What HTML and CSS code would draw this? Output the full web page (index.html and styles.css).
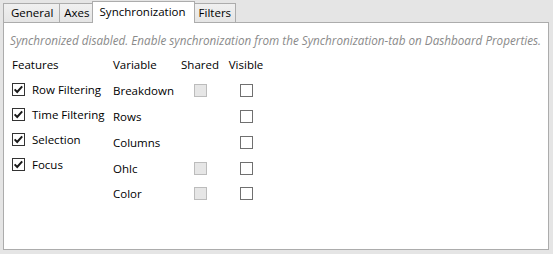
FILE: index.html
```html
<!DOCTYPE html>
<html lang="en">
<head>
    <meta charset="UTF-8">
    <title>Synchronization</title>
    <link rel="stylesheet" href="styles.css">
</head>
<body>
    <div class="window">
        <div class="tabs">
            <div class="tab">General</div>
            <div class="tab">Axes</div>
            <div class="tab active">Synchronization</div>
            <div class="tab">Filters</div>
        </div>

        <div class="panel">
            <p class="info">Synchronized disabled. Enable synchronization from the Synchronization-tab on Dashboard Properties.</p>

            <div class="content">
                <div class="features">
                    <div class="head">Features</div>
                    <label class="feature"><span class="check on"><svg viewBox="0 0 11 11"><path d="M1.6 5.4 L4.2 8 L9.2 2.4"/></svg></span>Row Filtering</label>
                    <label class="feature"><span class="check on"><svg viewBox="0 0 11 11"><path d="M1.6 5.4 L4.2 8 L9.2 2.4"/></svg></span>Time Filtering</label>
                    <label class="feature"><span class="check on"><svg viewBox="0 0 11 11"><path d="M1.6 5.4 L4.2 8 L9.2 2.4"/></svg></span>Selection</label>
                    <label class="feature"><span class="check on"><svg viewBox="0 0 11 11"><path d="M1.6 5.4 L4.2 8 L9.2 2.4"/></svg></span>Focus</label>
                </div>

                <div class="variables">
                    <div class="head">Variable</div>
                    <div class="head mid">Shared</div>
                    <div class="head mid">Visible</div>

                    <div class="name">Breakdown</div>
                    <div class="mid"><span class="check disabled"></span></div>
                    <div class="mid"><span class="check"></span></div>

                    <div class="name">Rows</div>
                    <div class="mid"></div>
                    <div class="mid"><span class="check"></span></div>

                    <div class="name">Columns</div>
                    <div class="mid"></div>
                    <div class="mid"><span class="check"></span></div>

                    <div class="name">Ohlc</div>
                    <div class="mid"><span class="check disabled"></span></div>
                    <div class="mid"><span class="check"></span></div>

                    <div class="name">Color</div>
                    <div class="mid"><span class="check disabled"></span></div>
                    <div class="mid"><span class="check"></span></div>
                </div>
            </div>
        </div>
    </div>
</body>
</html>
```

FILE: styles.css
```css
body {
    margin: 0;
    padding: 0;
    background-color: #e5e5e5;
    font-family: "Segoe UI", "Open Sans", sans-serif;
    font-size: 11.5px;
    color: #000;
}

.window {
    padding: 1px 4px 4px 3px;
}

.tabs {
    display: flex;
    align-items: flex-end;
    height: 21px;
}

.tab {
    height: 18px;
    line-height: 18px;
    padding: 0 4px;
    border: 1px solid #acacac;
    border-bottom: none;
    background: linear-gradient(#f0f0f0, #e5e5e5);
    margin-right: -1px;
}

.tab:first-child {
    padding: 0 6px 0 7px;
}

.tab.active {
    position: relative;
    z-index: 1;
    height: 21px;
    line-height: 19px;
    padding: 0 8px 0 7px;
    margin: 0 -1px -1px -2px;
    background: #fff;
}

.panel {
    height: 226px;
    border: 1px solid #acacac;
    background: #fff;
}

.info {
    margin: 9px 0 0 6px;
    line-height: 16px;
    font-size: 11.7px;
    color: #8a8a8a;
    font-style: italic;
    white-space: nowrap;
}

.content {
    display: flex;
    margin-top: 9px;
    padding-left: 8px;
}

.head {
    height: 16px;
    line-height: 16px;
}

.features {
    width: 101px;
    display: flex;
    flex-direction: column;
}

.features .head {
    margin-bottom: 4px;
}

.feature {
    display: flex;
    align-items: center;
    gap: 7px;
    height: 25px;
    white-space: nowrap;
}

.variables {
    display: grid;
    grid-template-columns: 58px 36px 34px;
    grid-template-rows: 21px repeat(5, 25.75px);
    column-gap: 11px;
    align-items: center;
    white-space: nowrap;
}

.variables .head {
    align-self: start;
}

.mid {
    display: flex;
    justify-content: center;
}

.check {
    display: inline-block;
    box-sizing: border-box;
    width: 13px;
    height: 13px;
    border: 1px solid #707070;
    background: #fff;
    flex: none;
}

.check.on {
    border-color: #333;
}

.check svg {
    display: block;
    width: 11px;
    height: 11px;
}

.check svg path {
    fill: none;
    stroke: #1a1a1a;
    stroke-width: 2;
}

.check.disabled {
    border-color: #bcbcbc;
    background: #e6e6e6;
}
```
